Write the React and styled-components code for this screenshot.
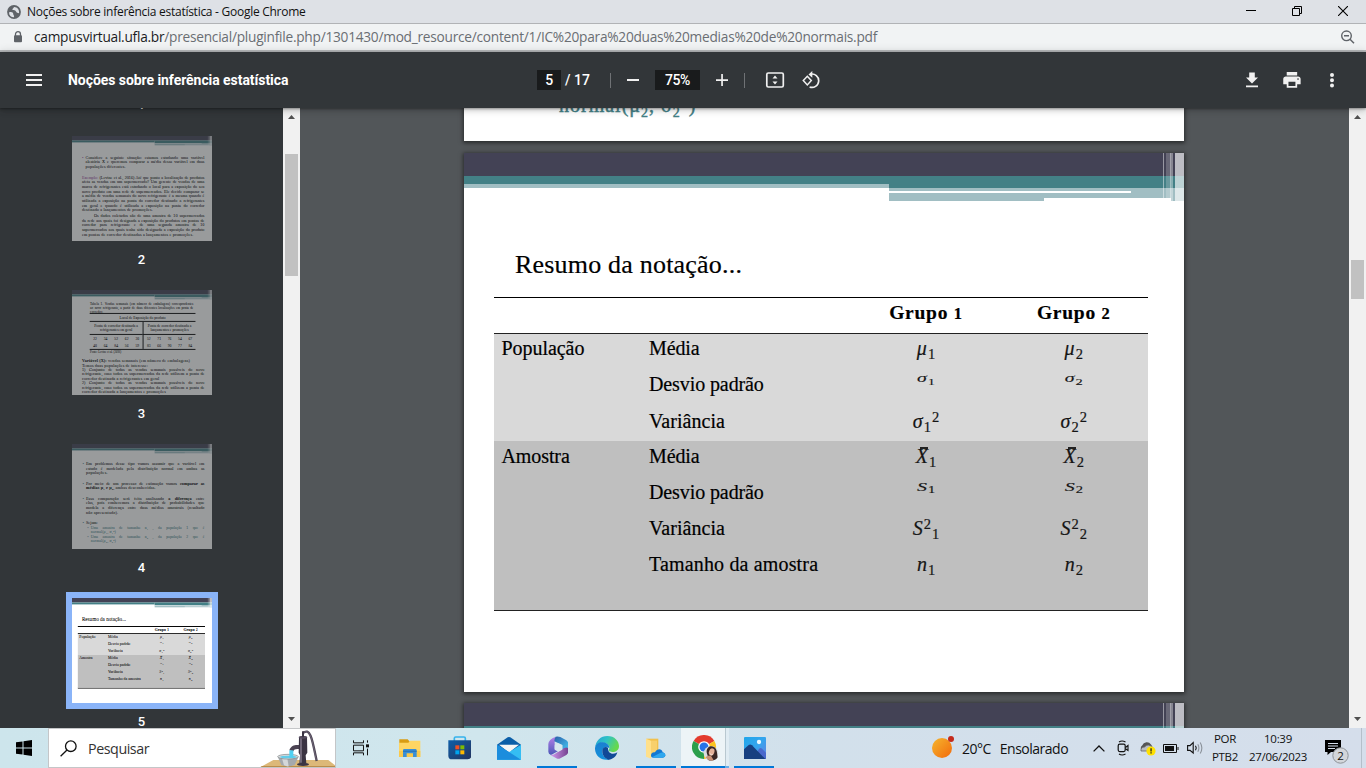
import React from "react";
import styled, { createGlobalStyle, css } from "styled-components";

const Global = createGlobalStyle`
  * { box-sizing: border-box; }
  body { margin: 0; overflow: hidden; background: #525659; }
  svg { display: block; flex: none; }
`;

const segoe = `"Open Sans", "Noto Sans", sans-serif`;
const georgia = `"Liberation Serif", serif`;

const Screen = styled.div`
  width: 1366px;
  height: 768px;
  display: flex;
  flex-direction: column;
  overflow: hidden;
  font-family: ${segoe};
`;

/* ---------- browser window ---------- */

const TitleBar = styled.header`
  height: 24px;
  flex: none;
  display: flex;
  align-items: center;
  padding-left: 7px;
  background: #dee1e6;
  border-bottom: 1px solid #b1b3b6;
`;
const WindowTitle = styled.span`
  margin-left: 6px;
  flex: 1;
  font-size: 12px;
  letter-spacing: -0.27px;
  color: #111;
  white-space: nowrap;
`;
const WindowButton = styled.span`
  width: 46px;
  height: 22px;
  display: flex;
  align-items: center;
  justify-content: center;
  padding-bottom: 2px;
`;
const AddressBar = styled.div`
  height: 28px;
  flex: none;
  display: flex;
  align-items: center;
  padding: 0 11px 1px 13px;
  background: #f1f3f4;
  border-bottom: 2px solid #b9bbbd;
`;
const Url = styled.span`
  flex: 1;
  margin-left: 11px;
  font-size: 13.7px;
  letter-spacing: -0.25px;
  color: #6a6e73;
  white-space: nowrap;
  b { font-weight: 400; color: #1b1c1e; }
`;

const PdfToolbar = styled.div`
  height: 56px;
  flex: none;
  display: flex;
  align-items: center;
  background: #323639;
  color: #fff;
  font: 500 14px Roboto, sans-serif;
  position: relative;
  z-index: 2;
  box-shadow: 0 -2px 8px rgba(0, 0, 0, 0.09), 0 4px 8px rgba(0, 0, 0, 0.06),
    0 1px 2px rgba(0, 0, 0, 0.3), 0 2px 6px rgba(0, 0, 0, 0.15);
`;
const DocTitle = styled.div`
  width: 537px;
  display: flex;
  align-items: center;
  gap: 26px;
  padding-left: 26px;
  white-space: nowrap;
  font-weight: 700;
  letter-spacing: -0.06px;
`;
const Field = styled.span`
  width: ${(p) => p.$w}px;
  height: 20px;
  background: #191b1c;
  display: flex;
  align-items: center;
  justify-content: center;
  letter-spacing: -0.4px;
`;
const PageTotal = styled.span`
  width: 45px;
  padding-left: 4px;
  letter-spacing: 0;
`;
const Divider = styled.i`
  width: 1px;
  height: 15px;
  margin: 0 ${(p) => p.$after}px 0 ${(p) => p.$before || 0}px;
  background: #6f7275;
`;
const Actions = styled.div`
  margin-left: auto;
  padding-right: 22px;
  display: flex;
  align-items: center;
  gap: 16px;
`;

/* ---------- viewer ---------- */

const Viewer = styled.div`
  height: 620px;
  flex: none;
  display: flex;
  overflow: hidden;
  background: #525659;
`;
const Sidebar = styled.nav`
  width: 283px;
  height: 620px;
  overflow: hidden;
  background: #323639;
  display: flex;
  flex-direction: column;
  align-items: center;
`;
const ThumbLabel = styled.div`
  height: 20px;
  flex: none;
  margin: ${(p) => (p.$first ? "-13px 0 15px" : "3px 0 14px")};
  font: 500 13px/20px Roboto, sans-serif;
  letter-spacing: 0.2px;
  color: #fff;
`;
const ThumbFrame = styled.div`
  width: 152px;
  height: 117px;
  flex: none;
  padding: 6px;
  background: ${(p) => (p.$active ? "#8ab4f8" : "transparent")};
`;
const ThumbWindow = styled.div`
  width: 140px;
  height: 105px;
  overflow: hidden;
  opacity: ${(p) => (p.$active ? 1 : 0.5)};
`;
const Miniature = styled.div`
  width: 720px;
  height: 540px;
  background: #fff;
  transform: scale(0.19444);
  transform-origin: 0 0;
`;

const ScrollTrack = styled.div`
  width: 17px;
  height: 620px;
  flex: none;
  display: flex;
  flex-direction: column;
  align-items: center;
  justify-content: space-between;
  background: #f1f1f1;
  padding: 7px 0;
`;
const ScrollSpan = styled.div`
  flex: 1;
  align-self: stretch;
  padding: ${(p) => p.$top}px 2px 0;
  &::before {
    content: "";
    display: block;
    height: ${(p) => p.$h}px;
    background: #c1c1c1;
  }
`;

const Pages = styled.main`
  width: 1049px;
  height: 620px;
  overflow: hidden;
  display: flex;
  flex-direction: column;
  align-items: center;
  gap: 11px;
  padding-right: 1px;
`;
const pageShadow = css`
  box-shadow: 0 1px 4px 1px rgba(0, 0, 0, 0.5);
`;
const Page = styled.section`
  width: 720px;
  height: ${(p) => p.$h || 539}px;
  flex: none;
  background: #fff;
  overflow: hidden;
  color: #000;
  font-family: ${georgia};
  -webkit-text-stroke: 0.2px currentColor;
  ${(p) => p.$shadow && pageShadow}
`;
const PriorPage = styled(Page)`
  margin-bottom: 1px;
`;
const PriorTail = styled.div`
  padding-left: 95px;
  margin-top: -15px;
  font-size: 20px;
  line-height: 24px;
  letter-spacing: 1px;
  color: #438086;
  -webkit-text-stroke: 0.4px currentColor;
  sub, sup { font-size: 14px; line-height: 0; }
`;

/* Slide banner: navy and teal bands with translucent stripes on the right */
const Banner = styled.div`
  position: relative;
  height: 48px;
  display: flex;
  flex-direction: column;
`;
const Navy = styled.div`
  height: 23px;
  background: #434255;
`;
const Bands = styled.div`
  display: grid;
  grid-template-columns: 425px 295px;
`;
const LeftBand = styled.div`
  height: 12px;
  background: linear-gradient(#438086 0 8px, #a1bec3 8px);
`;
const RightBand = styled.div`
  height: 25px;
  background:
    linear-gradient(#fff, #fff) 0 15px / 242px 2px no-repeat,
    linear-gradient(#fff, #fff) 155px 22px / 127px 3px no-repeat,
    linear-gradient(#438086 0 12px, #a1bec3 12px);
`;
const Stripes = styled.div`
  position: absolute;
  right: 0;
  top: 0;
  width: 21px;
  height: 48px;
  background: linear-gradient(
    90deg,
    rgba(255,255,255,.45) 0 1px, transparent 1px 3px,
    rgba(255,255,255,.2) 3px 7px, rgba(255,255,255,.5) 7px 8px,
    rgba(255,255,255,.36) 8px 10px, transparent 10px 12px,
    rgba(255,255,255,.65) 12px
  );
`;

const SlideTitle = styled.h1`
  margin: 48px 0 0 51px;
  height: 33px;
  font: 400 26px/32px ${georgia};
  letter-spacing: 0.2px;
  white-space: nowrap;
`;
const Table = styled.div`
  width: 654px;
  margin: 15px 0 0 30px;
  font-size: 20px;
  border-top: ${(p) => p.$rule}px solid #000;
  border-bottom: ${(p) => p.$rule}px solid #222;
`;
const Row = styled.div`
  display: grid;
  grid-template-columns: 147.5px 211px 147px 148.5px;
  height: ${(p) => p.$h || 36}px;
  line-height: 28px;
  white-space: nowrap;
`;
const HeadRow = styled(Row)`
  font-weight: 700;
  line-height: 30px;
  border-bottom: ${(p) => p.$rule}px solid #222;
  font-size: 19.5px;
`;
const Band = styled.div`
  background: ${(p) => p.$c};
  height: ${(p) => p.$h}px;
`;
const Cell = styled.span`
  padding: ${(p) => (p.$low ? 1 : 0)}px 0 0 7.5px;
  letter-spacing: ${(p) => p.$ls ?? -0.1}px;
`;
const Center = styled.span`
  text-align: center;
  letter-spacing: ${(p) => p.$ls || 0}px;
  small { font-size: 16.5px; }
`;
const Formula = styled.span`
  display: inline-block;
  color: #151515;
  transform: translateY(${(p) => p.$dy || 0}px) scaleY(${(p) => p.$sy || 1});
  i { font-size: 20px; position: relative; }
  sub, sup { font-size: 14.5px; line-height: 0; margin-left: 1px; letter-spacing: 0; }
  sub { vertical-align: -4px; }
  sup { vertical-align: 6px; }
`;
const Bar = styled.i`
  &::before {
    content: "";
    position: absolute;
    left: 4px;
    top: 2px;
    width: 8px;
    height: 1.5px;
    background: #222;
  }
`;

/* Body text of the small slides */
const Block = styled.div`
  margin: ${(p) => p.$mt || 0}px ${(p) => p.$r ?? 39}px 0 ${(p) => p.$l ?? 51}px;
  font-size: ${(p) => p.$fs || 21.8}px;
  line-height: ${(p) => p.$lh || 24}px;
  color: ${(p) => p.$c || "#000"};
  position: relative;
`;
const TextLine = styled.div`
  white-space: nowrap;
  text-align: justify;
  text-align-last: ${(p) => (p.$end ? "left" : "justify")};
  text-indent: ${(p) => p.$indent || 0}px;
  letter-spacing: ${(p) => (p.$end ? 0.7 : 0)}px;
  sub { font-size: 14px; line-height: 0; }
`;
const Bullet = styled.span`
  position: absolute;
  left: -18px;
  color: ${(p) => p.$c || "#438086"};
`;
const Accent = styled.span`
  color: #a04da3;
`;
const DataTable = styled.div`
  width: 544px;
  margin: -6px 0 0 91px;
  border-top: 5px solid #000;
  border-bottom: 5px solid #000;
  text-align: center;
  font-size: 19px;
  line-height: 22px;
`;
const DataTitle = styled.div`
  height: 41px;
  line-height: 38px;
  border-bottom: 5px solid #000;
`;
const DataHalves = styled.div`
  display: grid;
  grid-template-columns: 272px 1fr;
  & > :nth-child(even) { border-left: 5px solid #000; }
`;
const DataHead = styled.div`
  height: 67px;
  padding-top: 10px;
  border-bottom: 5px solid #000;
`;
const DataNumbers = styled.div`
  height: 72px;
  display: grid;
  grid-template-columns: repeat(5, 1fr);
  line-height: 36px;
`;

const SlideBanner = () => (
  <Banner>
    <Navy />
    <Bands><LeftBand /><RightBand /></Bands>
    <Stripes />
  </Banner>
);

const Lines = ({ items, indent }) =>
  items.map((t, i) => (
    <TextLine key={i} $end={i === items.length - 1} $indent={i === 0 ? indent : 0}>{t}</TextLine>
  ));

const two = (fn) => [1, 2].map((n) => <Center key={n}>{fn(n)}</Center>);

const NotationSlide = ({ shadow, rule = 1 }) => (
  <Page $shadow={shadow}>
    <SlideBanner />
    <SlideTitle>Resumo da notação...</SlideTitle>
    <Table $rule={rule}>
      <HeadRow $rule={rule}>
        <span /><span />
        <Center $ls={0.75}>Grupo <small>1</small></Center>
        <Center $ls={0.75}>Grupo <small>2</small></Center>
      </HeadRow>
      <Band $c="#d9d9d9" $h={107}>
        <Row><Cell $ls={-0.05}>População</Cell><Cell>Média</Cell>{two((n) => <Formula><i>μ</i><sub>{n}</sub></Formula>)}</Row>
        <Row><span /><Cell>Desvio padrão</Cell>{two((n) => <Formula $dy={-6} $sy={0.6}><i>σ</i><sub>{n}</sub></Formula>)}</Row>
        <Row><span /><Cell $low $ls={0.05}>Variância</Cell>{two((n) => <Formula $dy={1}><i>σ</i><sub>{n}</sub><sup>2</sup></Formula>)}</Row>
      </Band>
      <Band $c="#bfbfbf" $h={169}>
        <Row><Cell $low>Amostra</Cell><Cell $low>Média</Cell>{two((n) => <Formula $dy={1}><Bar>X</Bar><sub>{n}</sub></Formula>)}</Row>
        <Row><span /><Cell $low>Desvio padrão</Cell>{two((n) => <Formula $dy={-5} $sy={0.65}><i>S</i><sub>{n}</sub></Formula>)}</Row>
        <Row><span /><Cell $low $ls={0.05}>Variância</Cell>{two((n) => <Formula $dy={1}><i>S</i><sup>2</sup><sub>{n}</sub></Formula>)}</Row>
        <Row $h={60}><span /><Cell $low $ls={0.16}>Tamanho da amostra</Cell>{two((n) => <Formula $dy={1}><i>n</i><sub>{n}</sub></Formula>)}</Row>
      </Band>
    </Table>
  </Page>
);

const SituationSlide = () => (
  <Page>
    <SlideBanner />
    <Block $mt={50} $l={70} $fs={21.4}>
      <Bullet $c="#a04da3">•</Bullet>
      <Lines items={[
        "Considere a seguinte situação: estamos estudando uma variável",
        "aleatória X e queremos comparar a média dessa variável em duas",
        "populações diferentes.",
      ]} />
    </Block>
    <Block $mt={31} $fs={21.4}>
      <TextLine><Accent>Exemplo:</Accent> (Levine et al., 2016) Até que ponto a localização de produtos</TextLine>
      <Lines items={[
        "afeta as vendas em um supermercado? Um gerente de vendas de uma",
        "marca de refrigerantes está estudando o local para a exposição do seu",
        "novo produto em uma rede de supermercados. Ele decide comparar se",
        "a média de vendas semanais do novo refrigerante é a mesma quando é",
        "utilizada a exposição na ponta do corredor destinado a refrigerantes",
        "em geral e quando é utilizada a exposição na ponta do corredor",
        "destinado a lançamentos de promoções.",
      ]} />
    </Block>
    <Block $mt={5} $fs={21.4}>
      <Lines indent={62} items={[
        "Os dados coletados são de uma amostra de 10 supermercados",
        "da rede aos quais foi designada a exposição do produtos em pontas de",
        "corredor para refrigerante e de uma segunda amostra de 10",
        "supermercados aos quais tenha sido designada a exposição do produto",
        "em pontas de corredor destinadas a lançamentos e promoções.",
      ]} />
    </Block>
  </Page>
);

const DataSlide = () => (
  <Page>
    <SlideBanner />
    <Block $mt={16} $l={93} $r={96} $fs={17} $lh={20}>
      <Lines items={[
        "Tabela 1. Vendas semanais (em número de embalagens) correspondentes",
        "ao novo refrigerante, a partir de duas diferentes localizações em ponta de",
        "corredor.",
      ]} />
    </Block>
    <DataTable>
      <DataTitle>Local de Exposição do produto</DataTitle>
      <DataHalves>
        <DataHead>Ponta de corredor destinada a<br />refrigerantes em geral</DataHead>
        <DataHead>Ponta de corredor destinada a<br />lançamentos e promoções</DataHead>
        <DataNumbers>
          {[22, 34, 52, 62, 30, 40, 64, 84, 56, 59].map((n, i) => <span key={i}>{n}</span>)}
        </DataNumbers>
        <DataNumbers>
          {[52, 71, 76, 54, 67, 83, 66, 90, 77, 84].map((n, i) => <span key={i}>{n}</span>)}
        </DataNumbers>
      </DataHalves>
    </DataTable>
    <Block $l={93} $fs={15} $lh={24}>Fonte: Levine et al. (2016)</Block>
    <Block $mt={21} $lh={22.7} $fs={21.5}>
      <TextLine $end><b>Variável (X):</b> vendas semanais (em número de embalagens)</TextLine>
      <TextLine $end>Temos duas populações de interesse:</TextLine>
      <Lines items={[
        "1) Conjunto de todas as vendas semanais possíveis do novo",
        "refrigerante, caso todos os supermercados da rede utilizem a ponta de",
        "corredor destinada a refrigerantes em geral",
      ]} />
      <Lines items={[
        "2) Conjunto de todas as vendas semanais possíveis do novo",
        "refrigerante, caso todos os supermercados da rede utilizem a ponta de",
        "corredor destinada a lançamentos e promoções",
      ]} />
    </Block>
  </Page>
);

const ProblemSlide = () => (
  <Page>
    <SlideBanner />
    <Block $mt={41} $l={72}>
      <Bullet>•</Bullet>
      <Lines items={[
        "Em problemas desse tipo vamos assumir que a variável em",
        "estudo é modelada pela distribuição normal em ambas as",
        "populações.",
      ]} />
    </Block>
    <Block $mt={29} $l={72}>
      <Bullet>•</Bullet>
      <TextLine>Por meio de um processo de estimação vamos <b>comparar as</b></TextLine>
      <TextLine $end><b>médias μ<sub>1</sub> e μ<sub>2</sub></b>, ambas desconhecidas.</TextLine>
    </Block>
    <Block $mt={30} $l={72}>
      <Bullet>•</Bullet>
      <TextLine>Essa comparação será feita analisando <b>a diferença</b> entre</TextLine>
      <Lines items={[
        "elas, pois conhecemos a distribuição de probabilidades que",
        "modela a diferença entre duas médias amostrais (resultado",
        "não apresentado).",
      ]} />
    </Block>
    <Block $mt={29} $l={72}><Bullet>•</Bullet>Sejam:</Block>
    {[1, 2].map((n) => (
      <Block key={n} $mt={2} $l={96} $c="#438086" $fs={19.5} $lh={22}>
        <Bullet>▫</Bullet>
        <TextLine>Uma amostra de tamanho n<sub>{n}</sub> , da população {n} que é</TextLine>
        <TextLine $end>normal(μ<sub>{n}</sub>, σ<sub>{n}</sub>²)</TextLine>
      </Block>
    ))}
  </Page>
);

const Arrow = ({ down }) => (
  <svg width="7" height="4" viewBox="0 0 7 4"><path d={down ? "M0 0h7L3.5 4z" : "M0 4h7L3.5 0z"} fill="#505050" /></svg>
);

const Scrollbar = ({ top, h }) => (
  <ScrollTrack><Arrow /><ScrollSpan $top={top} $h={h} /><Arrow down /></ScrollTrack>
);

const Thumb = ({ n, active, children }) => (
  <>
    <ThumbFrame $active={active}><ThumbWindow $active={active}><Miniature>{children}</Miniature></ThumbWindow></ThumbFrame>
    <ThumbLabel>{n}</ThumbLabel>
  </>
);

/* ---------- taskbar ---------- */

const Taskbar = styled.footer`
  height: 40px;
  flex: none;
  display: flex;
  align-items: stretch;
  background: linear-gradient(90deg, #cde5ec 0, #d0e6ed 35%, #d2e0eb 60%, #d5deeb 100%);
  color: #111;
  position: relative;
  z-index: 3;
`;
const StartButton = styled.div`
  width: 48px;
  padding: 12px 0 0 16px;
`;
const SearchBox = styled.div`
  width: 288px;
  margin-right: 0.5px;
  display: flex;
  align-items: center;
  background: #fff;
  border: 1px solid #c4c6c8;
  padding-left: 11px;
  font-size: 14.3px;
  letter-spacing: -0.45px;
  color: #333;
  overflow: hidden;
`;
const SearchText = styled.span`
  flex: 1;
  margin-left: 11px;
`;
const AppButton = styled.div`
  width: 49.2px;
  flex: none;
  display: flex;
  align-items: center;
  justify-content: center;
  position: relative;
  ${(p) => p.$running && css`
    &::after {
      content: "";
      position: absolute;
      left: 4px;
      bottom: 0;
      width: 40px;
      height: 2px;
      background: #0078d7;
    }
  `}
  ${(p) => p.$focused && css`
    background: linear-gradient(90deg, #edf4f7 44px, #b9c8d0 44px 45px, #e0ecf3 45px 48px, transparent 48px);
    &::after {
      left: 0;
      width: 48px;
      background: linear-gradient(90deg, #0078d7 44px, #69aee8 44px);
    }
  `}
`;
const Weather = styled.div`
  margin-left: auto;
  width: 156px;
  display: flex;
  align-items: center;
  gap: 7px;
  font-size: 14px;
  letter-spacing: -0.5px;
  white-space: nowrap;
`;
const Condition = styled.span`
  margin-left: 2px;
`;
const TrayIcon = styled.div`
  width: 24px;
  display: flex;
  align-items: center;
  justify-content: center;
`;
const TrayText = styled.div`
  width: ${(p) => p.$w}px;
  text-align: center;
  font-size: 11.5px;
  line-height: 18px;
  letter-spacing: -0.3px;
  padding: 2px 0 0 ${(p) => p.$pl || 0}px;
  white-space: nowrap;
`;
const Notices = styled.div`
  width: 51px;
  padding: 11px 0 0 14px;
  border-right: 1px solid #b4bfca;
  margin-right: 4px;
`;

const Glyph = ({ box, k = 3, children }) => {
  const [, , w, h] = box.split(" ").map(Number);
  return <svg width={w / k} height={h / k} viewBox={box}>{children}</svg>;
};

const Pump = () => (
  <Glyph box="780 117 225 114">
    <path d="M780 232L820 210H985L1005 226V232z" fill="#dcb878" />
    <path d="M780 232L786 228H1005V232z" fill="#b98d4a" />
    <path d="M908 130C932 110 937 150 950 213" fill="none" stroke="#4b4353" strokeWidth="7" />
    <path d="M910 128C932 114 936 150 949 211" fill="none" stroke="#8d8496" strokeWidth="1.5" />
    <path d="M868 181C874 166 886 164 900 166L901 178C888 176 882 178 880 184z" fill="#4b4353" />
    <path d="M897 142Q909 132 921 142L922 188L917 196L919 220H898L900 196L896 188z" fill="#3b3443" />
    <path d="M903 142V218" stroke="#8d8496" strokeWidth="4" />
    <ellipse cx="909" cy="142" rx="13" ry="4" fill="#574d60" />
    <path d="M909 142V124" stroke="#3b3443" strokeWidth="6" />
    <ellipse cx="909" cy="223" rx="18" ry="5" fill="#3b3443" />
    <path d="M833 200L844 225Q864 233 884 225L896 200z" fill="#a5a9ad" />
    <path d="M846 205L852 226Q860 230 866 229L862 205z" fill="#d4d7d9" />
    <ellipse cx="864" cy="200" rx="31" ry="7" fill="#d8dcde" stroke="#7e8387" strokeWidth="2" />
    <ellipse cx="865" cy="201" rx="25" ry="4" fill="#62cdea" />
    <path d="M868 181H880V203H868z" fill="#4fd0f2" />
  </Glyph>
);

const icons = {
  taskView: (
    <Glyph box="1056 149 49 46">
      <g fill="none" stroke="#111" strokeWidth="3">
        <path d="M1057.500 150V157.500H1087.500V150M1057.500 164.500H1087.500V181.500H1057.500zM1057.500 195V187.500H1087.500V195M1099.500 150V157M1099.500 175V195" />
      </g>
      <path d="M1095 162h9v9h-9z" fill="#111" />
    </Glyph>
  ),
  explorer: (
    <Glyph box="1200 146 65 56">
      <path d="M1201 147H1226L1231 153V162H1201z" fill="#d99c13" />
      <path d="M1200 157H1228L1234 151H1264V200H1200z" fill="#ffd562" />
      <path d="M1200 182H1264V200H1200z" fill="#fbc94b" />
      <path d="M1212 201V180Q1212 176 1216 176H1249Q1253 176 1253 180V201H1242V189H1223V201z" fill="#3a8fd6" />
      <path d="M1212 181h41v4h-41z" fill="#2b78bd" />
    </Glyph>
  ),
  store: (
    <Glyph box="1343 140 71 71">
      <defs><linearGradient id="st" x1="0" y1="0" x2="1" y2="1"><stop stopColor="#0f5ea8" /><stop offset="1" stopColor="#23345f" /></linearGradient></defs>
      <path d="M1362 156V147Q1362 143 1366 143H1391Q1395 143 1395 147V156" fill="none" stroke="#36b3ec" strokeWidth="5" />
      <path d="M1344 153H1413V199Q1413 210 1402 210H1355Q1344 210 1344 199z" fill="url(#st)" />
      <path d="M1365 168h12v12h-12z" fill="#f25022" /><path d="M1380 168h12v12h-12z" fill="#7fba00" />
      <path d="M1365 183h12v12h-12z" fill="#00a4ef" /><path d="M1380 183h12v12h-12z" fill="#ffb900" />
    </Glyph>
  ),
  mail: (
    <Glyph box="51 139 72 69">
      <path d="M51 162L83 140Q87 138 91 140L123 162V180H51z" fill="#0b5ea8" />
      <path d="M57 162H117L90 183H84z" fill="#f5f5f5" />
      <path d="M51 162L123 207H51z" fill="#1f9be6" />
      <path d="M123 162V207H51z" fill="#35bdf3" />
      <path d="M51 163L87 184L123 207H51z" fill="#1b8ddd" />
    </Glyph>
  ),
  m365: (
    <Glyph box="203 139 62 70">
      <defs>
        <linearGradient id="ma" x1="0" y1="0" x2="0" y2="1"><stop stopColor="#b580e8" /><stop offset="1" stopColor="#4a57b7" /></linearGradient>
        <linearGradient id="mb" x1="0" y1="0" x2="1" y2="1"><stop stopColor="#2a5fa8" /><stop offset="1" stopColor="#47c9f5" /></linearGradient>
        <linearGradient id="mc" x1="0" y1="0" x2="1" y2="0"><stop stopColor="#d49af0" /><stop offset="1" stopColor="#73418f" /></linearGradient>
      </defs>
      <path d="M226 141Q204 150 204 163V186Q204 193 212 196L234 184L223 178V158Q224 149 226 141z" fill="url(#ma)" />
      <path d="M226 141Q233 139 240 142L258 152Q264 156 264 163V184L246 178V166L222 155Q222 146 226 141z" fill="url(#mb)" />
      <path d="M264 176V185Q264 192 258 196L240 206Q234 209 228 206L210 196Q222 196 228 190L250 176Q260 171 264 176z" fill="url(#mc)" />
      <path d="M223 167L234 161L246 167V180L234 186L223 180z" fill="#d7e7ee" />
    </Glyph>
  ),
  edge: (
    <Glyph box="345 138 72 72">
      <defs>
        <linearGradient id="ea" x1="0" y1="0" x2="1" y2=".4"><stop stopColor="#229fd8" /><stop offset=".5" stopColor="#2fc3c5" /><stop offset="1" stopColor="#66d84e" /></linearGradient>
        <linearGradient id="eb" x1="0" y1="0" x2="0" y2="1"><stop stopColor="#1a7fd0" /><stop offset="1" stopColor="#1492db" /></linearGradient>
      </defs>
      <path d="M345 174C347 152 362 138 382 138C404 138 417 153 417 168C417 180 408 186 397 186C388 186 384 182 387 178C391 172 387 160 371 158C357 157 347 164 345 174z" fill="url(#ea)" />
      <path d="M345 174C347 162 358 156 369 157C382 158 389 167 388 175C377 166 366 174 367 186C368 199 378 207 389 208C366 215 344 198 345 174z" fill="url(#eb)" />
      <path d="M367 184C366 174 375 168 384 173C383 184 390 191 399 191C405 191 409 189 412 187C409 200 396 210 385 209C374 205 367 196 367 184z" fill="#114a97" />
    </Glyph>
  ),
  folder: (
    <Glyph box="503 145 59 63">
      <path d="M504 147H540V200H504z" fill="#f2c14c" />
      <path d="M503 147L518 153V207L503 201z" fill="#ffe08a" />
      <path d="M518 153H536V199H518z" fill="#f8d06c" />
      <path d="M520 203C514 193 523 186 530 188C536 175 551 176 553 188C563 190 564 203 554 204H526Q522 204 520 203z" fill="#1278d2" />
      <path d="M522 202L547 189Q561 186 561 197Q560 204 552 204H526z" fill="#2ea7ee" />
    </Glyph>
  ),
  chrome: (
    <Glyph box="639 138 80 79">
      <path d="M675 174L643.800 156A36 36 0 0 1 706.200 156z" fill="#e33b2e" />
      <path d="M675 174L706.200 156A36 36 0 0 1 675 210z" fill="#fcc31e" />
      <path d="M675 174L675 210A36 36 0 0 1 643.800 156z" fill="#2c9f4b" />
      <circle cx="675" cy="174" r="17.500" fill="#fff" />
      <circle cx="675" cy="174" r="13.500" fill="#2673e8" />
      <circle cx="696" cy="193" r="22" fill="#d9dde0" />
      <path d="M683 190C682 174 695 168 705 174C715 180 714 194 716 205C710 216 695 217 686 212C690 204 684 198 683 190z" fill="#3a2724" />
      <ellipse cx="698" cy="189" rx="8" ry="11" fill="#e3b199" transform="rotate(20 698 189)" />
      <path d="M679 205Q690 196 697 202L704 214Q690 218 679 205z" fill="#c99176" />
      <path d="M693 194Q697 199 701 196" stroke="#fff" strokeWidth="2" fill="none" />
    </Glyph>
  ),
  photos: (
    <Glyph box="789 141 66 66">
      <defs><linearGradient id="ph" x1="0" y1="0" x2="1" y2="1"><stop stopColor="#20a6ea" /><stop offset=".5" stopColor="#35a5ee" /><stop offset="1" stopColor="#6a7fe0" /></linearGradient></defs>
      <rect x="789" y="141" width="66" height="66" rx="3" fill="url(#ph)" />
      <path d="M815 207L834 177Q838 172 843 176L855 188V207z" fill="#4a68cc" />
      <path d="M789 178L803 165Q808 161 813 166L853 207H789z" fill="#173f80" />
      <circle cx="834" cy="156" r="6.500" fill="#eaf8ff" />
    </Glyph>
  ),
};

const apps = [
  ["taskView"], ["explorer"], ["store"], ["mail"], ["m365", true], ["edge"],
  ["folder", true], ["chrome", true, true], ["photos", true],
];

const Fixed = ({ w, h, children, ...rest }) => (
  <svg width={w} height={h} viewBox={`0 0 ${w} ${h}`} {...rest}>{children}</svg>
);

const ToolIcon = styled.span`
  margin: 0 ${(p) => p.$after}px 0 ${(p) => p.$before || 0}px;
`;

export default function App() {
  return (
    <Screen>
      <Global />
      <TitleBar>
        <Fixed w={14} h={14}>
          <circle cx="7" cy="7" r="6.900" fill="#5f6368" />
          <path d="M2 7.500C4 6.500 6.500 7.300 6.200 9C6 10 7.500 10 7 12.300C4 12.300 2 10.500 2 7.500zM7 2C6.500 3.500 5 3.600 5.500 5C7 5.200 8.500 5 9 6.500C9.300 8 11 8 12 8.300C12.600 5 10.500 2 7 2z" fill="#dee1e6" />
        </Fixed>
        <WindowTitle>Noções sobre inferência estatística - Google Chrome</WindowTitle>
        <WindowButton><Fixed w={10} h={3}><path d="M0 1h10v1H0z" fill="#000" /></Fixed></WindowButton>
        <WindowButton><Fixed w={10} h={10}><path d="M.5 2.500h7v7h-7zM2.500 2.500v-2h7v7h-2" fill="none" stroke="#000" /></Fixed></WindowButton>
        <WindowButton><Fixed w={10} h={10}><path d="M0 0l10 10M10 0L0 10" stroke="#000" strokeWidth="1.100" /></Fixed></WindowButton>
      </TitleBar>
      <AddressBar>
        <Fixed w={10} h={12}>
          <path d="M2.500 5V3.200a2.500 2.500 0 0 1 5 0V5" fill="none" stroke="#5f6368" strokeWidth="1.300" />
          <rect x="1" y="4.300" width="8" height="7" rx="1" fill="#5f6368" />
        </Fixed>
        <Url><b>campusvirtual.ufla.br</b>/presencial/pluginfile.php/1301430/mod_resource/content/1/IC%20para%20duas%20medias%20de%20normais.pdf</Url>
        <Fixed w={15} h={14}>
          <circle cx="6.500" cy="5.800" r="4.800" fill="none" stroke="#5f6368" strokeWidth="1.400" />
          <path d="M4 5.800h5M10 9.300l4 4" stroke="#5f6368" strokeWidth="1.500" />
        </Fixed>
      </AddressBar>
      <PdfToolbar>
        <DocTitle>
          <Fixed w={16} h={12}><path d="M0 0h16v2H0zM0 5h16v2H0zM0 10h16v2H0z" fill="#f1f1f1" /></Fixed>
          Noções sobre inferência estatística
        </DocTitle>
        <Field $w={24}>5</Field>
        <PageTotal>/ 17</PageTotal>
        <Divider $before={4} $after={16} />
        <ToolIcon $after={16}><Fixed w={12} h={2}><path d="M0 0h12v2H0z" fill="#f1f1f1" /></Fixed></ToolIcon>
        <Field $w={45}>75%</Field>
        <ToolIcon $before={16} $after={16}><Fixed w={12} h={12}><path d="M5.200 0h1.700v12H5.200zM0 5.200h12v1.700H0z" fill="#f1f1f1" /></Fixed></ToolIcon>
        <Divider $after={20} />
        <ToolIcon $after={17}>
          <Fixed w={20} h={16}>
            <rect x="1.800" y="1" width="16.500" height="14" rx="1.500" fill="none" stroke="#f1f1f1" strokeWidth="1.700" />
            <path d="M7.500 6.500h5L10 3.500zM7.500 9.500h5L10 12.500z" fill="#f1f1f1" />
          </Fixed>
        </ToolIcon>
        <ToolIcon $after={0}>
          <Fixed w={19} h={18}>
            <path d="M5.300 5.300L9.300 9.600L5.300 13.900L1.300 9.600z" fill="none" stroke="#f1f1f1" strokeWidth="1.500" />
            <path d="M8.500 3.200A6.700 6.700 0 1 1 7.600 16" fill="none" stroke="#f1f1f1" strokeWidth="1.700" />
            <path d="M10.300 0v6.800L6.500 3.400z" fill="#f1f1f1" />
          </Fixed>
        </ToolIcon>
        <Actions>
          <svg width="24" height="24" viewBox="0 0 24 24"><path d="M18 9.500h-3.200V4.500H9.200v5H6l6 6zM6 17.500v1.700h12v-1.700z" fill="#f1f1f1" /></svg>
          <svg width="24" height="24" viewBox="0 0 24 24"><path d="M19 8H5c-1.660 0-3 1.340-3 3v6h4v4h12v-4h4v-6c0-1.660-1.340-3-3-3zm-3 11H8v-5h8v5zm3-7c-.55 0-1-.45-1-1s.45-1 1-1 1 .45 1 1-.45 1-1 1zM18 3H6v4h12V3z" fill="#f1f1f1" transform="translate(1.500 1.500) scale(.87)" /></svg>
          <svg width="24" height="24" viewBox="0 0 24 24"><path d="M12 9a2 2 0 1 0 0-4 2 2 0 0 0 0 4zm0 1.200a2 2 0 1 0 0 4 2 2 0 0 0 0-4zm0 5.300a2 2 0 1 0 0 4 2 2 0 0 0 0-4z" fill="#f1f1f1" /></svg>
        </Actions>
      </PdfToolbar>

      <Viewer>
        <Sidebar>
          <ThumbLabel $first>1</ThumbLabel>
          <Thumb n={2}><SituationSlide /></Thumb>
          <Thumb n={3}><DataSlide /></Thumb>
          <Thumb n={4}><ProblemSlide /></Thumb>
          <Thumb n={5} active><NotationSlide rule={5} /></Thumb>
        </Sidebar>
        <Scrollbar top={35} h={122} />
        <Pages>
          <PriorPage $h={33} $shadow>
            <PriorTail>normal(μ<sub>2</sub>, σ<sub>2</sub><sup>2</sup>)</PriorTail>
          </PriorPage>
          <NotationSlide shadow />
          <Page $shadow><SlideBanner /></Page>
        </Pages>
        <Scrollbar top={141} h={39} />
      </Viewer>

      <Taskbar>
        <StartButton>
          <Fixed w={16} h={16}><path d="M0 2.300L6.500 1.400V7.500H0zM7.500 1.200L16 0V7.500H7.500zM0 8.500H6.500V14.600L0 13.700zM7.500 8.500H16V16L7.500 14.800z" fill="#000" /></Fixed>
        </StartButton>
        <SearchBox>
          <Fixed w={17} h={17}><circle cx="10.800" cy="6.200" r="5.300" fill="none" stroke="#111" strokeWidth="1.300" /><path d="M7 10L.6 16.200" stroke="#111" strokeWidth="1.300" /></Fixed>
          <SearchText>Pesquisar</SearchText>
          <Pump />
        </SearchBox>
        {apps.map(([name, running, focused]) => (
          <AppButton key={name} $running={running} $focused={focused}>{icons[name]}</AppButton>
        ))}
        <Weather>
          <Fixed w={24} h={24}>
            <defs><linearGradient id="sun" x1="0" y1="0" x2="1" y2="1"><stop stopColor="#f5b62e" /><stop offset="1" stopColor="#f26a0c" /></linearGradient></defs>
            <circle cx="11" cy="12" r="10" fill="url(#sun)" />
            <circle cx="20" cy="3" r="3" fill="#c42b1c" />
          </Fixed>
          <span>20°C</span>
          <Condition>Ensolarado</Condition>
        </Weather>
        <TrayIcon><Fixed w={12} h={7}><path d="M.6 6.400L6 1L11.400 6.400" fill="none" stroke="#111" strokeWidth="1.300" /></Fixed></TrayIcon>
        <TrayIcon>
          <Fixed w={12} h={16}>
            <rect x="1.200" y="4.200" width="7" height="7.400" rx="1.500" fill="none" stroke="#111" strokeWidth="1.200" />
            <path d="M8.500 7.500L11 5.500v5L8.500 8.800M2 2Q5 0 8.500 2M2 14Q5 16 8.500 14" fill="none" stroke="#111" strokeWidth="1.100" />
          </Fixed>
        </TrayIcon>
        <TrayIcon>
          <Fixed w={17} h={15}>
            <path d="M3 9.500A3 3 0 0 1 3.200 4.500A5 5 0 0 1 12 3.500Q14 5 13.500 9.500z" fill="#555" />
            <path d="M2 10Q1.500 6 5.500 6Q9 2 13 6V10z" fill="#b9bdc0" stroke="#666" strokeWidth=".8" />
            <circle cx="12" cy="10" r="4.600" fill="#ffe100" />
            <path d="M11.400 7.300h1.300v3.200h-1.300zM11.400 11.300h1.300v1.300h-1.300z" fill="#222" />
          </Fixed>
        </TrayIcon>
        <TrayIcon><Fixed w={18} h={9}><path d="M1.500.500h13v8h-13zM16 3v3" fill="none" stroke="#111" /><path d="M3 2h9v5H3z" fill="#111" /></Fixed></TrayIcon>
        <TrayIcon>
          <Fixed w={17} h={14}>
            <path d="M.6 4.600H3L6.200 1.500V12L3 9.400H.6z" fill="none" stroke="#111" strokeWidth="1.100" />
            <path d="M8.500 4.800Q10 7 8.500 9.200" fill="none" stroke="#111" strokeWidth="1.100" />
            <path d="M10.800 3.200Q13 7 10.800 10.800M13.200 1.500Q16.500 7 13.200 12.500" fill="none" stroke="#8b929a" strokeWidth="1.100" />
          </Fixed>
        </TrayIcon>
        <TrayText $w={36}>POR<br />PTB2</TrayText>
        <TrayText $w={68} $pl={2}>10:39<br />27/06/2023</TrayText>
        <Notices>
          <Fixed w={26} h={26}>
            <path d="M0 1h16v12H6L2.500 16V13H0z" fill="#000" />
            <path d="M3 4.500h10M3 7h10M3 9.500h7" stroke="#d5deeb" strokeWidth="1" />
            <circle cx="15.500" cy="16.500" r="7.700" fill="#d3d6da" stroke="#8f9499" />
            <text x="15.500" y="20.600" textAnchor="middle" fontSize="11.500" fontFamily="Open Sans, sans-serif" fill="#111">2</text>
          </Fixed>
        </Notices>
      </Taskbar>
    </Screen>
  );
}
